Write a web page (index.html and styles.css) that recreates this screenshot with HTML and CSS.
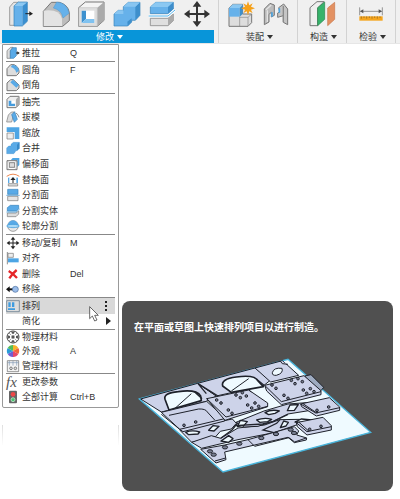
FILE: index.html
```
<!DOCTYPE html>
<html lang="zh-CN">

<head>
    <meta charset="UTF-8">
    <title>修改</title>
    <link rel="stylesheet" href="styles.css">
</head>

<body>
    <!--工具栏-->
    <div class="toolbar">
        <div class="group modify">
            <div class="tools">
                <button class="tool" aria-label="推拉">
                    <svg viewBox="0 0 84 84"><path d="M8 21 20 7H36L26 20V76H8Z" fill="#e4e4e4" stroke="#777" stroke-width="2"/><path d="M21 18H46V78H21Z" fill="#66b1ea"/><path d="M21 18 34 6H61L46 18Z" fill="#8cc8f2"/><path d="M46 18 61 6V64L46 78Z" fill="#3a8fd0"/><path d="M21 18 34 6H61V64L46 78H21Z" fill="none" stroke="#3281b9" stroke-width="2"/><path d="M55 41H70" stroke="#222" stroke-width="3"/><path d="M67 34 78 41 67 48Z" fill="#222"/></svg>
                </button>
                <button class="tool" aria-label="圆角">
                    <svg viewBox="0 0 84 84"><path d="M4 79V34L28 7H52Q79 15 82 38V62L62 79Z" fill="#bdbdbd" stroke="#777" stroke-width="3"/><path d="M5 78V32Q52 26 60 56V78Z" fill="#e3e3e3"/><path d="M34 24 44 6Q76 8 81 40L63 54Q58 30 34 24Z" fill="#66b1ea" stroke="#3b8ac4" stroke-width="1"/></svg>
                </button>
                <button class="tool" aria-label="抽壳">
                    <svg viewBox="0 0 84 84"><path d="M5 23 25 6H81V61L61 79H5Z" fill="#f4f4f4" stroke="#777" stroke-width="3"/><path d="M61 23 81 6V61L61 79Z" fill="#aaa"/><path d="M5 23H61V79H5Z" fill="#dedede" stroke="#999" stroke-width="1"/><path d="M14 32H52V69H14Z" fill="#fff"/><path d="M14 32H27V57L14 69Z" fill="#3d91cf"/><path d="M14 69 27 57H52V69Z" fill="#80c2f0"/></svg>
                </button>
                <button class="tool" aria-label="合并">
                    <svg viewBox="0 0 84 84"><path d="M3 42 16 31H31V20L46 7H81V46L67 61H56V66L44 78H3Z" fill="#66b1ea" stroke="#3682b8" stroke-width="2"/><path d="M67 20 81 7V46L67 61ZM43 65 56 55V66L44 78Z" fill="#3e8fcc"/><path d="M31 20 46 7H81L67 20ZM3 42 16 31H31V42Z" fill="#88c5f1"/></svg>
                </button>
                <button class="tool" aria-label="分割实体">
                    <svg viewBox="0 0 84 84"><path d="M7 21 23 7H76V27L60 41H7Z" fill="#66b1ea" stroke="#327fb6" stroke-width="2"/><path d="M7 21 23 7H76L60 21Z" fill="#8bc8f2"/><path d="M60 21 76 7V27L60 41Z" fill="#3f8ecb"/><path d="M7 55H60L76 42V62L60 77H7Z" fill="#dfdfdf" stroke="#777" stroke-width="2"/><path d="M60 55 76 42V62L60 77Z" fill="#aaa"/><path d="M2 48H60L81 30" fill="none" stroke="#fff" stroke-width="8"/><path d="M2 48H60L81 30" fill="none" stroke="#55b4ec" stroke-width="3"/></svg>
                </button>
                <button class="tool" aria-label="移动/复制">
                    <svg viewBox="0 0 84 84"><path d="M42 12V74M12 42H72" stroke="#333" stroke-width="6"/><path d="M42 3 55 20H29ZM42 81 55 64H29ZM3 42 20 29V55ZM81 42 64 29V55Z" fill="#333"/></svg>
                </button>
            </div>
            <button class="caption">修改<span class="arrow"></span></button>
        </div>
        <div class="group assemble">
            <div class="tools">
                <button class="tool" aria-label="新建零部件">
                    <svg viewBox="0 0 84 84"><path d="M6 24 17 13H47V42H74V68L63 79H6Z" fill="#ddd" stroke="#777" stroke-width="3"/><path d="M6 24H38V50H6Z" fill="#66b1ea"/><path d="M6 24 17 13H47L38 24Z" fill="#8bc8f2"/><path d="M38 24 47 14V42L38 50Z" fill="#3d8fcc"/><path d="M38 50V79M38 52H63V79M63 52 74 42" fill="none" stroke="#888" stroke-width="2"/><path d="M63 4 67 16 77 10 72 20 84 25 72 29 77 40 67 34 63 46 59 34 49 40 54 29 42 25 54 20 49 10 59 16Z" fill="#f5a11a"/></svg>
                </button>
                <button class="tool" aria-label="联接">
                    <svg viewBox="0 0 84 84"><path d="M7 27 24 10 37 15V46L28 51V37L21 43V66L7 74Z" fill="#bbb" stroke="#777" stroke-width="3"/><path d="M12 29 28 15M16 31V66" stroke="#e3e3e3" stroke-width="4"/><path d="M50 23 65 12 77 27V74L64 67V47L47 52V39L53 36Z" fill="#c5c5c5" stroke="#777" stroke-width="3"/><path d="M64 18V66" stroke="#8b8b8b" stroke-width="4"/><path d="M30 37V50M52 25V38" stroke="#4ca6e3" stroke-width="5"/></svg>
                </button>
            </div>
            <button class="caption">装配<span class="arrow"></span></button>
        </div>
        <div class="group">
            <div class="tools">
                <button class="tool" aria-label="偏移平面">
                    <svg viewBox="0 0 84 84"><path d="M6 23 27 5H48L29 24V77H6Z" fill="#eee" stroke="#777" stroke-width="3"/><path d="M29 23 50 6V58L29 77Z" fill="#36b36b" stroke="#28864f" stroke-width="2"/><path d="M59 24 80 7V58L59 77Z" fill="#e39162" stroke="#c9774a" stroke-width="2"/></svg>
                </button>
            </div>
            <button class="caption">构造<span class="arrow"></span></button>
        </div>
        <div class="group">
            <div class="tools">
                <button class="tool" aria-label="测量">
                    <svg viewBox="0 0 84 84"><path d="M8 22V46M76 22V46M10 34H74" stroke="#666" stroke-width="2"/><path d="M9 34 19 28V40ZM75 34 65 28V40Z" fill="#555"/><path d="M7 49H77V62H7Z" fill="#f5a51d"/><path d="M13 49V56M21 49V54M29 49V56M37 49V54M45 49V56M53 49V54M61 49V56M69 49V54" stroke="#8b6422" stroke-width="2"/></svg>
                </button>
            </div>
            <button class="caption">检验<span class="arrow"></span></button>
        </div>
    </div>

    <!--修改菜单-->
    <div class="menu">
        <ul class="section">
            <li><button class="item"><svg viewBox="0 0 42 42"><path d="M3 14 14 4H21L13 15V37H3Z" fill="#ddd" stroke="#777" stroke-width="2"/><path d="M13 14 20 5H31V29L23 37H13Z" fill="#59aae7" stroke="#3481ba" stroke-width="2"/><path d="M30 21H36" stroke="#222" stroke-width="3"/><path d="M34 16 41 21 34 26Z" fill="#222"/></svg><span>推拉</span><span>Q</span></button></li>
        </ul>
        <ul class="section two">
            <li><button class="item"><svg viewBox="0 0 42 42"><path d="M3 38V17L14 5H24Q38 11 39 24V30L31 38Z" fill="#ddd" stroke="#777" stroke-width="3"/><path d="M14 12 20 5Q36 7 39 23L31 29Q27 15 14 12Z" fill="#59aae7"/></svg><span>圆角</span><span>F</span></button></li>
            <li><button class="item"><svg viewBox="0 0 42 42"><path d="M3 38V15L14 5H22L39 21V30L31 38Z" fill="#ddd" stroke="#777" stroke-width="3"/><path d="M13 13 21 5 39 21 31 29Z" fill="#59aae7"/></svg><span>倒角</span></button></li>
        </ul>
        <ul class="section nine">
            <li><button class="item"><svg viewBox="0 0 42 42"><path d="M3 13 12 4H39V29L30 38H3Z" fill="#eee" stroke="#777" stroke-width="3"/><path d="M30 13 39 4V29L30 38Z" fill="#aaa"/><path d="M8 17H27V33H8Z" fill="#fff"/><path d="M8 17H16V26H27V33H8Z" fill="#459bdc"/></svg><span>抽壳</span></button></li>
            <li><button class="item"><svg viewBox="0 0 42 42"><path d="M2 35 7 15 16 6H25L17 36H2Z" fill="#ddd" stroke="#777" stroke-width="2"/><path d="M17 14 26 5 34 28 25 37Z" fill="#59aae7" stroke="#3481ba" stroke-width="2"/><path d="M30 9Q37 13 39 22" stroke="#555" fill="none" stroke-width="2"/></svg><span>拔模</span></button></li>
            <li><button class="item"><svg viewBox="0 0 42 42"><path d="M2 4H40V39H26V18H2Z" fill="#4da5e4"/><path d="M3 21H22V39H3Z" fill="#eee" stroke="#777" stroke-width="2"/></svg><span>缩放</span></button></li>
            <li><button class="item"><svg viewBox="0 0 42 42"><path d="M2 21 8 15H15V10L22 4H40V22L33 29H28V33L23 38H2Z" fill="#59aae7" stroke="#3988c4"/><path d="M33 11 40 4V22L33 29Z" fill="#3789c8"/></svg><span>合并</span></button></li>
            <li><button class="item"><svg viewBox="0 0 42 42"><path d="M14 10 20 3H40V24L34 30V10Z" fill="#4da5e4"/><path d="M3 11H33V38H3Z" fill="#fff" stroke="#777" stroke-width="3"/><path d="M10 17H26V31H10Z" fill="#ddd" stroke="#555" stroke-width="2"/><path d="M3 11 10 17M33 11 26 17M3 38 10 31M33 38 26 31" stroke="#777"/></svg><span>偏移面</span></button></li>
            <li><button class="item"><svg viewBox="0 0 42 42"><path d="M2 10Q21-3 40 10" fill="none" stroke="#ed8952" stroke-width="3"/><path d="M6 14H36V30H6Z" fill="#59aae7"/><path d="M10 13H31V31H10Z" fill="#fff"/><path d="M21 30V18" stroke="#222" stroke-width="3"/><path d="M13 21 21 12 29 21Z" fill="#222"/><path d="M7 32H35V39H7Z" fill="#ddd" stroke="#777" stroke-width="2"/></svg><span>替换面</span></button></li>
            <li><button class="item"><svg viewBox="0 0 42 42"><path d="M5 4H36V19H5Z" fill="#59aae7" stroke="#3884bb" stroke-width="2"/><path d="M5 25H36V38H5Z" fill="#e5e5e5" stroke="#777" stroke-width="2"/><path d="M1 22H41" stroke="#2c86c9" stroke-width="2"/></svg><span>分割面</span></button></li>
            <li><button class="item"><svg viewBox="0 0 42 42"><path d="M4 11 13 4H38V14L30 21H4Z" fill="#59aae7" stroke="#3884bb" stroke-width="2"/><path d="M4 27H30L38 21V30L30 38H4Z" fill="#ddd" stroke="#777" stroke-width="2"/><path d="M1 24H30L41 15" fill="none" stroke="#278ed5" stroke-width="2"/></svg><span>分割实体</span></button></li>
            <li><button class="item"><svg viewBox="0 0 42 42"><circle cx="21" cy="21" r="16" fill="#e8e8e8" stroke="#777" stroke-width="2"/><path d="M5 20A16 16 0 0 1 37 20Z" fill="#59aae7"/><ellipse cx="21" cy="21" rx="19" ry="5" fill="#a8d9f7" stroke="#3293d6" stroke-width="2"/></svg><span>轮廓分割</span></button></li>
        </ul>
        <ul class="section four">
            <li><button class="item"><svg viewBox="0 0 42 42"><path d="M21 7V35M7 21H35" stroke="#222" stroke-width="3"/><path d="M21 2 28 11H14ZM21 40 28 31H14ZM2 21 11 14V28ZM40 21 31 14V28Z" fill="#222"/></svg><span>移动/复制</span><span>M</span></button></li>
            <li><button class="item"><svg viewBox="0 0 42 42"><path d="M4 3V40" stroke="#555" stroke-width="2"/><path d="M6 7H22V19H6Z" fill="#eee" stroke="#777" stroke-width="2"/><path d="M6 22H38V34H6Z" fill="#4da5e4"/></svg><span>对齐</span></button></li>
            <li><button class="item"><svg viewBox="0 0 42 42"><path d="M8 12Q19 18 33 33M32 9Q18 21 10 34" fill="none" stroke="#e52528" stroke-width="7"/></svg><span>删除</span><span>Del</span></button></li>
            <li><button class="item"><svg viewBox="0 0 42 42"><path d="M6 22H24" stroke="#111" stroke-width="6"/><path d="M0 22 11 13V31Z" fill="#111"/><circle cx="28" cy="22" r="9" fill="#9bbde9" stroke="#4a6d9e" stroke-width="2"/></svg><span>移除</span></button></li>
        </ul>
        <ul class="section two">
            <li><button class="item active"><svg viewBox="0 0 42 42"><path d="M2 5H40V38H2Z" fill="#ddd" stroke="#536d82" stroke-width="2"/><path d="M7 10H14V24H7ZM18 10H25V24H18ZM6 28H27V33H6Z" fill="#3e9ce0"/></svg><span>排列</span><span></span><span class="more"></span></button></li>
            <li><button class="item"><i></i><span>简化</span><span></span><span class="submenu"></span></button></li>
        </ul>
        <ul class="section three">
            <li><button class="item"><svg viewBox="0 0 42 42"><circle cx="21" cy="21" r="18" fill="#fff" stroke="#444" stroke-width="3"/><circle cx="21" cy="21" r="5" fill="#555"/><path d="M16 5 18 11H24L26 5ZM37 16 30 18V24L37 26ZM16 37 18 31H24L26 37ZM5 16 12 18V24L5 26Z" fill="#555"/><path d="M9 9 16 16M33 9 26 16M9 33 16 26M33 33 26 26" stroke="#777" stroke-width="2"/></svg><span>物理材料</span></button></li>
            <li><button class="item"><svg viewBox="0 0 42 42"><path d="M21 21V3A18 18 0 0 1 37 12Z" fill="#f7b52b"/><path d="M21 21 37 12A18 18 0 0 1 37 30Z" fill="#f16739"/><path d="M21 21 37 30A18 18 0 0 1 21 39Z" fill="#e64768"/><path d="M21 21V39A18 18 0 0 1 5 30Z" fill="#735bd0"/><path d="M21 21 5 30A18 18 0 0 1 5 12Z" fill="#299bd8"/><path d="M21 21 5 12A18 18 0 0 1 21 3Z" fill="#55bd58"/></svg><span>外观</span><span>A</span></button></li>
            <li><button class="item"><svg viewBox="0 0 42 42"><path d="M4 5H38V38H4Z" fill="#f4f4f4" stroke="#666" stroke-width="2"/><path d="M4 11H38M10 5V20M21 5V20M32 5V20" stroke="#8298b3" stroke-width="2"/><circle cx="15" cy="28" r="4" fill="#ddd" stroke="#555" stroke-width="2"/><circle cx="28" cy="28" r="4" fill="#ddd" stroke="#555" stroke-width="2"/></svg><span>管理材料</span></button></li>
        </ul>
        <ul class="section two">
            <li><button class="item"><i class="fx">fx</i><span>更改参数</span></button></li>
            <li><button class="item"><svg viewBox="0 0 42 42"><rect x="9" y="2" width="24" height="38" rx="3" fill="#666"/><circle cx="21" cy="13" r="7" fill="#ef4747"/><circle cx="21" cy="29" r="6" fill="#4ac573" stroke="#d6f4dd" stroke-width="2"/></svg><span>全部计算</span><span>Ctrl+B</span></button></li>
        </ul>
    </div>
    <div class="fade"></div>

    <svg class="cursor" viewBox="0 0 30 48"><path d="M2 2V38L10 30 17 45 24 42 17 28H28Z" fill="#fff" stroke="#222" stroke-width="2"/></svg>

    <!--命令提示-->
    <div class="tooltip">
        <p>在平面或草图上快速排列项目以进行制造。</p>
        <svg viewBox="70 185 705 350">
            <path d="M74 311 520 192 768 411 325 530Z" fill="#effaff" stroke="#48b5dc" stroke-width="4"/>
            <g fill="#cdd3e9" stroke="#1d2029" stroke-width="3" stroke-linejoin="round">
                <path d="M78 311 249 264 305 302 275 318 140 350Z"/>
                <path d="M249 264 421 218 468 254 448 270 305 302Z"/>
                <path d="M421 218 503 196 519 210 552 240 468 260Z"/>
                <path d="M151 312Q145 293 191 289Q245 281 258 302L260 316 163 344Z" fill="#effaff" stroke-width="5"/>
                <path d="M324 272Q318 251 365 245Q421 237 430 257L446 274 350 291Z" fill="#effaff" stroke-width="5"/>
                <path d="M181 339 230 295M350 287 402 250" fill="none"/>
                <path d="M473 232Q477 216 502 219Q507 234 485 240Q472 241 473 232Z" fill="#effaff"/>
                <path d="M496 196 503 205 520 207"/>
                <path d="M196 405 300 382 353 371 365 384 350 401 317 408 303 424 231 441Z"/>
                <path d="M231 441 290 421 318 429 370 398 450 389 495 373 560 372 548 388 478 412 370 433 261 459Z"/>
                <path d="M364 381 448 347 520 326 576 322 582 346 520 356 476 378 430 393 390 395Z"/>
                <path d="M213 411Q232 403 255 410L250 416 222 418ZM282 405 295 391 313 393 298 407ZM319 437 342 421 355 430 342 441ZM368 394 377 375 398 379 388 390ZM426 374Q450 365 471 372L459 379 435 381ZM451 352Q470 341 494 347L481 354 462 358ZM518 346 526 329 551 328 539 345ZM497 397 507 377 521 381 514 392ZM541 380 560 371 592 374 573 383Z" fill="#effaff" stroke-width="4"/>
                <path d="M258 462 330 449 400 433 539 394 552 407 546 419 576 428 575 434 539 442 520 426 420 449 330 470 334 493 304 503Z"/>
                <path d="M400 433 420 453 523 427 540 440 575 428M301 497 333 488" fill="none"/>
                <path d="M140 351 276 318 330 367V377L205 409 195 402Z"/>
                <path d="M140 357 195 402 330 370M163 360 252 341Q273 340 278 350L300 374" fill="none"/>
                <path d="M276 310 402 284 459 323V334L331 375Z"/>
                <path d="M276 310 334 365 459 333M402 284 410 290" fill="none"/>
                <path d="M570 242 589 238 627 276 619 286 604 290Z" fill="#9eabc0"/>
                <path d="M450 270 568 241 619 286V298L500 328 456 287Z"/>
                <path d="M450 270 500 319 619 289" fill="none"/>
                <path d="M558 326 644 307 675 335V345L605 362 561 334Z"/>
                <path d="M558 326 603 353 675 337M565 325 608 354" fill="none"/>
                <path d="M545 382 625 366 650 391V404L577 419 548 394Z"/>
                <path d="M545 382 577 409 650 394M553 381 583 408" fill="none"/>
            </g>
            <g fill="none" stroke="#22252e" stroke-width="4">
                <path d="M360 391 444 386 476 378 520 357M318 429 352 404 369 383M478 412 445 404 486 384 496 373"/>
                <path d="M262 310 240 290M310 302 250 265 275 295M448 270 426 252"/>
            </g>
            <g fill="#777d90" stroke="#22252e" stroke-width="3">
                <circle cx="208" cy="390" r="4"/><circle cx="243" cy="380" r="4"/>
                <circle cx="306" cy="314" r="4"/><circle cx="319" cy="323" r="4"/><circle cx="341" cy="344" r="4"/><circle cx="352" cy="354" r="4"/>
                <circle cx="364" cy="299" r="4"/><circle cx="377" cy="307" r="4"/><circle cx="383" cy="292" r="4"/><circle cx="395" cy="302" r="4"/>
                <circle cx="399" cy="329" r="4"/><circle cx="411" cy="338" r="4"/><circle cx="421" cy="323" r="4"/><circle cx="432" cy="333" r="4"/>
                <circle cx="472" cy="269" r="4"/><circle cx="484" cy="279" r="4"/><circle cx="508" cy="300" r="4"/><circle cx="520" cy="309" r="4"/>
                <circle cx="530" cy="255" r="4"/><circle cx="541" cy="265" r="4"/><circle cx="550" cy="250" r="4"/><circle cx="563" cy="259" r="4"/>
                <circle cx="566" cy="284" r="4"/><circle cx="576" cy="294" r="4"/><circle cx="587" cy="280" r="4"/><circle cx="598" cy="289" r="4"/>
                <circle cx="607" cy="345" r="4"/><circle cx="642" cy="335" r="4"/><circle cx="585" cy="402" r="4"/><circle cx="619" cy="393" r="4"/>
                <ellipse cx="286" cy="468" rx="8" ry="5"/><ellipse cx="297" cy="478" rx="8" ry="5"/><ellipse cx="331" cy="456" rx="8" ry="5"/><ellipse cx="374" cy="445" rx="8" ry="5"/>
                <ellipse cx="440" cy="428" rx="8" ry="5"/><ellipse cx="484" cy="416" rx="8" ry="5"/><ellipse cx="528" cy="403" rx="8" ry="5"/><ellipse cx="538" cy="413" rx="8" ry="5"/>
            </g>
        </svg>
    </div>
</body>

</html>
```
FILE: styles.css
```
* {
    margin: 0;
    padding: 0;
    box-sizing: border-box;
}

body {
    position: relative;
    min-height: 100vh;
    background: #fff;
    color: #333;
    font: 9px/12px "Liberation Sans", "Noto Sans CJK SC", sans-serif;
}

button {
    border: 0;
    background: none;
    color: inherit;
    font: inherit;
}

ul {
    list-style: none;
}

svg {
    display: block;
}

/* 工具栏 */
.toolbar {
    display: flex;
    height: 44px;
    padding-left: 2px;
    background: #f0f0f0;
    border-bottom: 1px solid #e6e6e6;
}

.group {
    width: 49px;
    border-right: 1px solid #d2d2d2;
}

.modify {
    width: 217px;
    padding-right: 4px;
}

.assemble {
    width: 79px;
}

.tools {
    display: flex;
    justify-content: space-around;
    height: 30px;
}

.modify .tools {
    justify-content: space-between;
    padding: 0 3px 0 5px;
}

.assemble .tools {
    padding: 0 4px;
}

.tool,
.tool svg {
    width: 28px;
    height: 28px;
}

.caption {
    display: flex;
    align-items: center;
    justify-content: center;
    gap: 3px;
    width: 100%;
    height: 13px;
    padding-left: 3px;
}

.modify .caption {
    background: #0895d9;
    color: #fff;
}

.arrow {
    border: 3px solid transparent;
    border-top: 4px solid;
    border-bottom: 0;
}

/* 下拉菜单 */
.menu {
    width: 117px;
    margin-left: 2px;
    padding: 0 3px 2px;
    border: 1px solid #999;
    border-radius: 0 0 2px 2px;
}

.section {
    display: grid;
    grid-auto-rows: 1fr;
    min-height: 16px;
}

.section + .section {
    border-top: 1px solid #888;
}

.two {
    min-height: 32px;
}

.three {
    min-height: 44px;
}

.four {
    min-height: 63px;
}

.nine {
    min-height: 141px;
}

.item {
    display: grid;
    grid-template-columns: 14px 46px 26px 1fr;
    column-gap: 2px;
    align-items: center;
    width: 100%;
    height: 100%;
    text-align: left;
    white-space: nowrap;
}

.item svg {
    width: 14px;
    height: 14px;
}

.active {
    background: #d9d9d9;
}

.fx {
    color: #555;
    font: italic 15px/14px "Liberation Serif", serif;
}

.more {
    width: 2px;
    height: 10px;
    margin-left: 7px;
    background: repeating-linear-gradient(#222 0 2px, transparent 2px 4px);
}

.submenu {
    margin-left: 8px;
    width: 5px;
    border: 4px solid transparent;
    border-left: 5px solid #222;
    border-right: 0;
}

.fade {
    width: 117px;
    height: 20px;
    margin: 17px 0 0 2px;
    border: solid;
    border-width: 0 1px;
    border-image: linear-gradient(#ddd, #fff) 1;
}

.cursor {
    position: absolute;
    left: 89px;
    top: 306px;
    width: 10px;
    height: 16px;
}

/* 提示框 */
.tooltip {
    position: absolute;
    left: 122px;
    right: 7px;
    top: 301px;
    padding: 20px 12px 17px;
    border-radius: 8px;
    background: #505050;
    color: #fff;
}

.tooltip p {
    font-size: 10px;
    font-weight: bold;
    line-height: 14px;
    white-space: nowrap;
}

.tooltip svg {
    width: 235px;
    margin: 22px 0 0 4px;
}
```
